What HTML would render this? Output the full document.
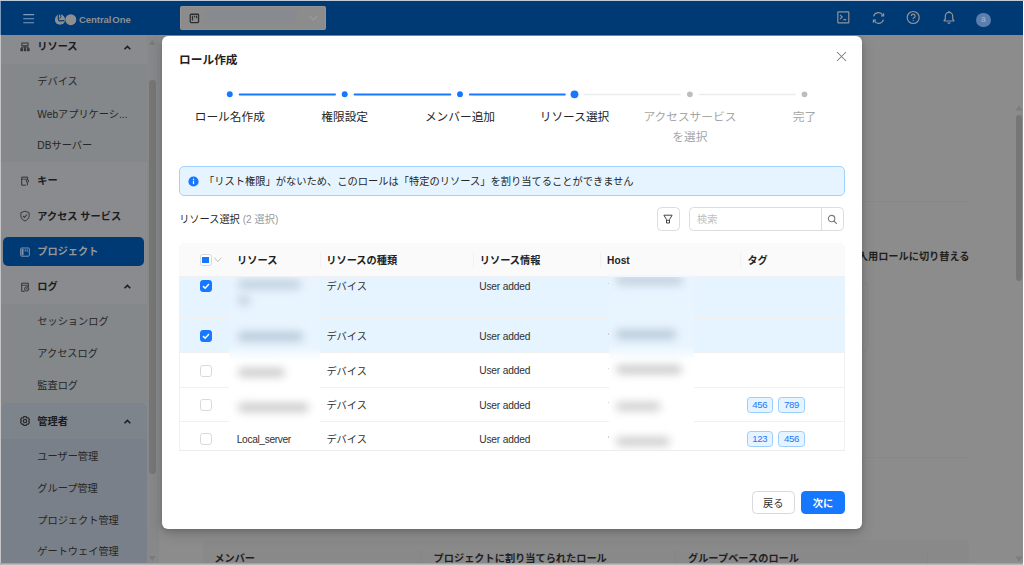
<!DOCTYPE html>
<html lang="ja">
<head>
<meta charset="utf-8">
<title>ロール作成</title>
<style>
*{box-sizing:border-box;margin:0;padding:0}
html,body{width:1024px;height:565px;overflow:hidden;background:#fff}
body{font-family:"Liberation Sans","Noto Sans CJK JP",sans-serif;font-size:10.2px;color:#262626;position:relative}
.abs{position:absolute}
#frame{position:absolute;left:1px;top:1px;width:1022px;height:563px;background:#8c8c8c;overflow:hidden;border-radius:0 0 2px 2px}
#hdr{position:absolute;left:0;top:0;width:1022px;height:34px;background:#003a75}
#side{position:absolute;left:0;top:34px;width:146px;height:529px;background:#8a8b8e;overflow:hidden}
#side .sub{position:absolute;left:0;width:146px;background:#84888b}
#side .it{position:absolute;left:36.3px;white-space:nowrap;color:#262626;font-size:10.2px;line-height:14px}
#side .b{font-weight:700;color:#1c1c1c}
#side svg{position:absolute}
.sbtrack{position:absolute;background:#8c8c8c}
.sbthumb{position:absolute;background:#7a7a7a;border-radius:4px}
#modal{position:absolute;left:161px;top:35px;width:700.4px;height:493px;background:#fff;border-radius:6px;box-shadow:0 4px 14px rgba(0,0,0,.18),0 2px 5px rgba(0,0,0,.12)}
.step{position:absolute;text-align:center;font-size:11.7px;line-height:19.7px;color:#262626;white-space:nowrap;transform:translateX(-50%)}
.step.g{color:#a6a6a6}
.dot{position:absolute;border-radius:50%;background:#1677ff}
.dot.g{background:#bfbfbf}
.ln{position:absolute;background:#1677ff;border-radius:1px}
.ln.g{background:#ebebeb}
.cb{position:absolute;width:12px;height:12px;border-radius:2.8px;border:1px solid #d9d9d9;background:#fff}
.cb.on{background:#1677ff;border-color:#1677ff}
.row{position:absolute;left:0;width:100%;border-bottom:1px solid #f0f0f0}
.row.sel{background:#e6f4ff}
.c{position:absolute;white-space:nowrap;line-height:14px;font-size:10.2px;color:#303030}
.tag{position:absolute;height:15.8px;border:1px solid #9bcdff;background:#e6f4ff;color:#1677ff;border-radius:3.4px;font-size:9.6px;letter-spacing:-0.3px;line-height:13.8px;text-align:center}
.bl{position:absolute;border-radius:5px;filter:blur(4.3px)}
.bgt{position:absolute;white-space:nowrap;font-weight:700;color:#1f1f1f;font-size:10.2px;line-height:14px}
</style>
</head>
<body>
<div id="frame">
<div id="hdr">
<svg class="abs" style="left:22px;top:12px" width="12" height="12" viewBox="0 0 12 12"><path d="M0.3 1.6H11.1M0.3 5.7H11.1M0.3 9.8H11.1" stroke="#7f9bbd" stroke-width="1.05" fill="none"/></svg>
<svg class="abs" style="left:53px;top:12px" width="26" height="14" viewBox="0 0 26 14">
      <circle cx="6" cy="6.7" r="5.1" fill="#8f8f8f"/>
      <path d="M4.7 1.6 C3.9 4 4.2 7.9 5.6 7.9 L10.4 7.6" stroke="#003a75" stroke-width="1.15" fill="none"/>
      <path d="M6.2 1.2 L6.9 3.6 L5.8 5.6" stroke="#003a75" stroke-width="0.9" fill="none"/>
      <circle cx="16.8" cy="6.7" r="5.5" fill="#8f8f8f"/>
    </svg>
<div class="abs" style="left:78px;top:12px;font-size:9.6px;line-height:14px;font-weight:700;color:#8e8e8e;letter-spacing:-0.1px;white-space:nowrap">Central<span style="margin-left:1px">One</span></div>
<div class="abs" style="left:179px;top:5px;width:146px;height:24px;background:#8c8c8c;border:1px solid #949494;border-radius:1.500px"></div>
<svg class="abs" style="left:187.500px;top:11.800px" width="11" height="11" viewBox="0 0 11 11"><rect x="1.250" y="1.250" width="8.300" height="8.300" rx="0.800" fill="none" stroke="#2e2e2e" stroke-width="1.300"/><path d="M3.500 2.800V7.600M5.600 2.800V4.600M7.600 2.800V5.200" stroke="#2e2e2e" stroke-width="1.200" fill="none"/></svg>
<div class="abs" style="left:203.500px;top:10.200px;width:92px;height:14.600px;background:linear-gradient(to bottom,#848991,#898b8f 55%,#8c8c8c);filter:blur(1.200px)"></div>
<svg class="abs" style="left:308px;top:14px" width="9" height="7" viewBox="0 0 9 7"><path d="M0.8 1.2L4.4 5.2L8 1.2" stroke="#a6a6a6" stroke-width="0.9" fill="none"/></svg>
<svg class="abs" style="left:836px;top:9.7px" width="13" height="13" viewBox="0 0 13 13"><rect x="0.8" y="0.8" width="11" height="11" rx="0.6" fill="none" stroke="#939393" stroke-width="1.2"/><path d="M3 3.8L5.3 6L3 8.2M6.3 8.6H9.2" stroke="#939393" stroke-width="1.1" fill="none"/></svg>
<svg class="abs" style="left:871px;top:9.7px" width="13" height="14" viewBox="0 0 13 14"><path d="M1.6 5.4A5 5 0 0 1 10.8 4.2M11.4 8.6A5 5 0 0 1 2.2 9.8" stroke="#939393" stroke-width="1.2" fill="none"/><path d="M11.6 2.2V4.8H9M1.4 11.8V9.2H4" stroke="#939393" stroke-width="1.2" fill="none"/></svg>
<svg class="abs" style="left:905px;top:9.2px" width="15" height="15" viewBox="0 0 15 15"><circle cx="7.2" cy="7.5" r="6" fill="none" stroke="#939393" stroke-width="1.2"/><path d="M5.3 6A1.9 1.9 0 1 1 7.9 7.8C7.3 8.1 7.2 8.5 7.2 9.1" stroke="#939393" stroke-width="1.2" fill="none"/><circle cx="7.2" cy="10.7" r="0.65" fill="#939393"/></svg>
<svg class="abs" style="left:941px;top:8.7px" width="14" height="15" viewBox="0 0 14 15"><path d="M2.2 11V10.2L3.3 9.3V6A3.7 3.7 0 0 1 10.7 6V9.3L11.8 10.2V11Z" fill="none" stroke="#939393" stroke-width="1.2" stroke-linejoin="round"/><path d="M7 1V2.4M5.8 12.4A1.3 1.3 0 0 0 8.2 12.4" stroke="#939393" stroke-width="1.2" fill="none"/></svg>
<div class="abs" style="left:975px;top:11.7px;width:14.5px;height:14.5px;border-radius:50%;background:#5b7eae;color:#a8b3c2;font-size:8.5px;line-height:13.5px;text-align:center">a</div>
</div>
<div id="side">
<div class="sub" style="top:28.7px;height:98.7px"></div>
<div class="sub" style="top:269px;height:99.3px"></div>
<div class="sub" style="top:368.3px;height:200px;background:#7e848c;border-radius:5px 5px 0 0"></div>
<div class="sub" style="top:403.5px;height:200px;background:#798089"></div>
<div class="abs" style="left:2px;top:201.6px;width:140.700px;height:29.500px;background:#003a75;border-radius:5px"></div>
<div class="it b" style="top:5.3px">リソース</div>
<div class="it" style="top:40.4px">デバイス</div>
<div class="it" style="top:72.5px"><span class="la">Web</span>アプリケーシ...</div>
<div class="it" style="top:104.3px"><span class="la">DB</span>サーバー</div>
<div class="it b" style="top:138.9px">キー</div>
<div class="it b" style="top:174.6px">アクセス サービス</div>
<div class="it b" style="top:209.8px;color:#979797">プロジェクト</div>
<div class="it b" style="top:244.7px">ログ</div>
<div class="it" style="top:280.1px">セッションログ</div>
<div class="it" style="top:312.0px">アクセスログ</div>
<div class="it" style="top:344.0px">監査ログ</div>
<div class="it b" style="top:379.5px">管理者</div>
<div class="it" style="top:414.9px">ユーザー管理</div>
<div class="it" style="top:446.7px">グループ管理</div>
<div class="it" style="top:478.6px">プロジェクト管理</div>
<div class="it" style="top:510.3px">ゲートウェイ管理</div>
<svg style="left:121.9px;top:8.6px" width="9" height="7" viewBox="0 0 9 7"><path d="M1.500 5.300L4.400 2.400L7.300 5.300" stroke="#1f1f1f" stroke-width="1.600" fill="none"/></svg>
<svg style="left:121.9px;top:247.9px" width="9" height="7" viewBox="0 0 9 7"><path d="M1.500 5.300L4.400 2.400L7.300 5.300" stroke="#1f1f1f" stroke-width="1.600" fill="none"/></svg>
<svg style="left:121.9px;top:383.0px" width="9" height="7" viewBox="0 0 9 7"><path d="M1.500 5.300L4.400 2.400L7.300 5.300" stroke="#1f1f1f" stroke-width="1.600" fill="none"/></svg>
<svg style="left:18.3px;top:5.6px" width="12" height="12" viewBox="0 0 12 12" fill="none" stroke="#333" stroke-width="1"><rect x="2.9" y="2" width="6.2" height="2.8"/><rect x="1.4" y="7.2" width="2.6" height="3" fill="#333" stroke="none"/><rect x="4.8" y="7.2" width="2.4" height="3" fill="#333" stroke="none"/><rect x="8" y="7.2" width="2.6" height="3" fill="#333" stroke="none"/><path d="M6 4.800V7.200M2.700 7.200V6.100H9.300V7.200"/></svg>
<svg style="left:18px;top:140.4px" width="12" height="12" viewBox="0 0 12 12" fill="none" stroke="#333" stroke-width="1"><path d="M8.600 4.400V2.100H2.700V10.200H7"/><path d="M2.700 4.100H8.600" stroke-width="0.800"/><circle cx="8.400" cy="5.900" r="1.250"/><path d="M8.400 7.200V10.300"/></svg>
<svg style="left:18.4px;top:175.3px" width="12" height="12" viewBox="0 0 12 12" fill="none" stroke="#3a3a3a" stroke-width="1"><path d="M6 1.200L10.100 2.600V6C10.100 8.300 8.400 10 6 11C3.600 10 1.900 8.300 1.900 6V2.600Z" stroke-linejoin="round"/><path d="M4.100 6L5.500 7.400L8 4.500" stroke-width="1.100"/></svg>
<svg style="left:18.2px;top:210.5px" width="12" height="12" viewBox="0 0 12 12" fill="none" stroke="#8094b0" stroke-width="1"><rect x="1.700" y="2" width="8.600" height="8.200" rx="0.800"/><rect x="2.600" y="2.900" width="1.900" height="6.400" fill="#8094b0" stroke="none"/><path d="M6.200 3.400V5.400M8.200 3.400V5.800"/></svg>
<svg style="left:18px;top:245.5px" width="12" height="12" viewBox="0 0 12 12" fill="none" stroke="#333" stroke-width="1"><path d="M9.300 6.200V2.200H2.700V10.300H5.800"/><path d="M2.700 4.300H9.300" stroke-width="0.800"/><circle cx="7.700" cy="7.900" r="2.100"/><path d="M7.700 6.900V8.100H8.700" stroke-width="0.800"/></svg>
<svg style="left:18.1px;top:379.9px" width="12" height="12" viewBox="0 0 12 12" fill="none" stroke="#2b2b2b" stroke-width="1"><circle cx="6" cy="6" r="1.700" stroke-width="1.200"/><path d="M4.89 1.54L7.11 1.54L7.85 2.80L9.31 2.80L10.42 4.73L9.70 6.00L10.42 7.27L9.31 9.20L7.85 9.20L7.11 10.46L4.89 10.46L4.15 9.20L2.69 9.20L1.58 7.27L2.30 6.00L1.58 4.73L2.69 2.80L4.15 2.80Z" stroke-linejoin="round" stroke-width="1.300"/></svg>
</div>
<div class="sbtrack" style="left:146px;top:34px;width:11.6px;height:529px;background:#87888a"></div>
<svg class="abs" style="left:147.3px;top:37.8px" width="9" height="7" viewBox="0 0 9 7"><path d="M1 6L4.3 0.800L7.600 6Z" fill="#7a7a7a"/></svg>
<svg class="abs" style="left:147.3px;top:553.5px" width="9" height="7" viewBox="0 0 9 7"><path d="M1 1L4.300 6.200L7.600 1Z" fill="#7a7a7a"/></svg>
<div class="sbthumb" style="left:148.3px;top:78.6px;width:6.800px;height:394px;background:#767676;border-radius:3.400px"></div>
<div id="bg">
<svg class="abs" style="left:1014px;top:103.5px" width="8" height="6" viewBox="0 0 8 6"><path d="M0.5 5.5L4 0.5L7.5 5.500Z" fill="#7d7d7d"/></svg>
<div class="sbthumb" style="left:1015px;top:113.8px;width:6px;height:166.2px;background:#767676;border-radius:3px"></div>
<svg class="abs" style="left:1014px;top:554.5px" width="8" height="6" viewBox="0 0 8 6"><path d="M0.5 0.5L4 5.5L7.5 0.500Z" fill="#7d7d7d"/></svg>
<div class="abs" style="left:859px;top:200px;width:109px;height:1px;background:#888"></div>
<div class="bgt" style="left:856.8px;top:248.9px">入用ロールに切り替える</div>
<div class="abs" style="left:859px;top:455.5px;width:109px;height:1px;background:#888"></div>
<div class="abs" style="left:847px;top:282.3px;width:20px;height:69px;border:1px solid #868686;border-radius:0 3.500px 3.500px 0"></div>
<div class="abs" style="left:201.7px;top:538.6px;width:766.0px;height:40px;background:#898989;border-radius:5px 5px 0 0"></div>
<div class="abs" style="left:420px;top:550px;width:1px;height:14px;background:#858585"></div>
<div class="abs" style="left:673.6px;top:550px;width:1px;height:14px;background:#858585"></div>
<div class="abs" style="left:926px;top:550px;width:1px;height:14px;background:#858585"></div>
<div class="bgt" style="left:213.3px;top:551.2px">メンバー</div>
<div class="bgt" style="left:432.6px;top:551.2px">プロジェクトに割り当てられたロール</div>
<div class="bgt" style="left:687px;top:551.2px">グループベースのロール</div>
</div>
<div id="modal">
<div class="abs" style="left:17.1px;top:15.5px;font-size:11.7px;line-height:16px;font-weight:700;color:#1f1f1f;white-space:nowrap">ロール作成</div>
<svg class="abs" style="left:674.3px;top:14.9px" width="11" height="11" viewBox="0 0 11 11"><path d="M1 1L10 10M10 1L1 10" stroke="#7c7c7c" stroke-width="1.050" fill="none"/></svg>
<svg class="abs" style="left:0;top:48px" width="700" height="20" viewBox="0 0 700 20"><circle cx="67.8" cy="10.3" r="2.95" fill="#1677ff"/><rect x="76.7" y="9.55" width="97.3" height="2.0" rx="1.0" fill="#1677ff"/><circle cx="182.7" cy="10.3" r="2.95" fill="#1677ff"/><rect x="191.6" y="9.55" width="97.7" height="2.0" rx="1.0" fill="#1677ff"/><circle cx="298" cy="10.3" r="2.95" fill="#1677ff"/><rect x="306.9" y="9.55" width="96.9" height="2.0" rx="1.0" fill="#1677ff"/><circle cx="412.5" cy="10.3" r="3.9" fill="#1677ff"/><rect x="421.4" y="9.8" width="97.8" height="1.5" rx="0.75" fill="#ececec"/><circle cx="527.9" cy="10.3" r="2.85" fill="#bdbdbd"/><rect x="536.8" y="9.8" width="97.0" height="1.5" rx="0.75" fill="#ececec"/><circle cx="642.5" cy="10.3" r="2.85" fill="#bdbdbd"/></svg>
<div class="step" style="left:67.8px;top:71.0px">ロール名作成</div>
<div class="step" style="left:182.7px;top:71.0px">権限設定</div>
<div class="step" style="left:298px;top:71.0px">メンバー追加</div>
<div class="step" style="left:412.5px;top:71.0px;color:#222">リソース選択</div>
<div class="step g" style="left:527.9px;top:71.0px">アクセスサービス<br>を選択</div>
<div class="step g" style="left:642.5px;top:71.0px">完了</div>
<div class="abs" style="left:17.3px;top:130.4px;width:665.4px;height:29.2px;background:#e6f4ff;border:1px solid #a3d1ff;border-radius:5px"></div>
<svg class="abs" style="left:26.1px;top:140.2px" width="11" height="11" viewBox="-0.5 -0.5 11 11"><circle cx="5" cy="5" r="5.100" fill="#1677ff"/><rect x="4.4" y="4.2" width="1.2" height="3.400" fill="#fff"/><circle cx="5" cy="2.8" r="0.75" fill="#fff"/></svg>
<div class="c" style="left:41.9px;top:139.1px;color:#262626;font-size:10.26px">「リスト権限」がないため、このロールは「特定のリソース」を割り当てることができません</div>
<div class="c" style="left:17.2px;top:177.3px;color:#262626">リソース選択 <span style="color:#999">(2 選択)</span></div>
<div class="abs" style="left:494.6px;top:171.3px;width:23.200px;height:23.500px;border:1px solid #dcdcdc;border-radius:4.500px;background:#fff"></div>
<svg class="abs" style="left:501.2px;top:178.2px" width="10" height="10" viewBox="0 0 10 10" fill="none" stroke="#444" stroke-width="1"><path d="M0.900 1.200H9.100L6.500 5.600V9H3.500V5.600Z" stroke-linejoin="round"/><path d="M3.6 6.3H6.400"/></svg>
<div class="abs" style="left:526.6px;top:171.3px;width:155.3px;height:23.500px;border:1px solid #dcdcdc;border-radius:4.500px;background:#fff"></div>
<div class="abs" style="left:658.5px;top:171.3px;width:1px;height:23.500px;background:#dcdcdc"></div>
<div class="c" style="left:535px;top:176.8px;color:#bfbfbf">検索</div>
<svg class="abs" style="left:664.7px;top:177.8px" width="11" height="11" viewBox="0 0 11 11" fill="none" stroke="#7a7a7a" stroke-width="1.1"><circle cx="4.6" cy="4.6" r="3.2"/><path d="M7 7L9.8 9.800"/></svg>
<div id="tbl" class="abs" style="left:17px;top:207.3px;width:666px;height:207.5px;overflow:hidden;border-radius:5px 5px 0 0">
<div class="abs" style="left:0;top:0;width:1px;height:100%;background:#f0f0f0"></div>
<div class="abs" style="right:0;top:0;width:1px;height:100%;background:#f0f0f0"></div>
<div class="row sel" style="top:33.7px;height:41.6px"></div>
<div class="row sel" style="top:75.3px;height:34.6px"></div>
<div class="row" style="top:109.9px;height:34.6px"></div>
<div class="row" style="top:144.5px;height:34.6px"></div>
<div class="row" style="top:179.1px;height:34.6px"></div>
<div class="cb on" style="left:20.5px;top:36.4px"></div><svg class="abs" style="left:20.5px;top:36.4px" width="12" height="12" viewBox="0 0 12 12"><path d="M3 6.1L5.1 8.2L9 3.9" stroke="#fff" stroke-width="1.5" fill="none"/></svg>
<div class="c" style="left:147.4px;top:36.4px">デバイス</div>
<div class="c" style="left:300.2px;top:36.3px;letter-spacing:-0.15px">User added</div>
<div class="abs" style="left:428.8px;top:39.4px;width:1.5px;height:1.5px;background:#c8c8c8;border-radius:50%"></div>
<div class="cb on" style="left:20.5px;top:86.9px"></div><svg class="abs" style="left:20.5px;top:86.9px" width="12" height="12" viewBox="0 0 12 12"><path d="M3 6.1L5.1 8.2L9 3.9" stroke="#fff" stroke-width="1.5" fill="none"/></svg>
<div class="c" style="left:147.4px;top:86.9px">デバイス</div>
<div class="c" style="left:300.2px;top:86.8px;letter-spacing:-0.15px">User added</div>
<div class="abs" style="left:428.8px;top:89.9px;width:1.5px;height:1.5px;background:#c8c8c8;border-radius:50%"></div>
<div class="cb" style="left:20.5px;top:121.3px"></div>
<div class="c" style="left:147.4px;top:121.3px">デバイス</div>
<div class="c" style="left:300.2px;top:121.2px;letter-spacing:-0.15px">User added</div>
<div class="abs" style="left:428.8px;top:124.3px;width:1.5px;height:1.5px;background:#c8c8c8;border-radius:50%"></div>
<div class="cb" style="left:20.5px;top:155.6px"></div>
<div class="c" style="left:147.4px;top:155.6px">デバイス</div>
<div class="c" style="left:300.2px;top:155.5px;letter-spacing:-0.15px">User added</div>
<div class="abs" style="left:428.8px;top:158.6px;width:1.5px;height:1.5px;background:#c8c8c8;border-radius:50%"></div>
<div class="cb" style="left:20.5px;top:190.1px"></div>
<div class="c" style="left:147.4px;top:190.1px">デバイス</div>
<div class="c" style="left:300.2px;top:190.0px;letter-spacing:-0.15px">User added</div>
<div class="abs" style="left:428.8px;top:193.1px;width:1.5px;height:1.5px;background:#c8c8c8;border-radius:50%"></div>
<div class="c" style="left:57.8px;top:190.0px;letter-spacing:-0.36px">Local_server</div>
<div class="tag" style="left:568px;top:153.9px;width:25.5px">456</div>
<div class="tag" style="left:599.4px;top:153.9px;width:26.3px">789</div>
<div class="tag" style="left:568px;top:188.1px;width:25.5px">123</div>
<div class="tag" style="left:599.4px;top:188.1px;width:26.3px">456</div>
<div class="abs" style="left:49.5px;top:33.7px;width:91.7px;height:151px;background:linear-gradient(to bottom,#e9f4fe 0,#e8f4fe 69px,#fff 84px,#fff 100%)"></div>
<div class="abs" style="left:429.7px;top:31.2px;width:85.3px;height:177.5px;background:linear-gradient(to bottom,#e9f4fe 0,#e8f4fe 71.5px,#fff 86.5px,#fff 100%)"></div>
<div class="bl" style="left:59px;top:36.6px;width:63px;height:9px;background:#c0d0de"></div>
<div class="bl" style="left:59px;top:53.2px;width:12px;height:9px;background:#c0d0dd"></div>
<div class="bl" style="left:59px;top:88.8px;width:65px;height:9px;background:#b7c8d7"></div>
<div class="bl" style="left:59px;top:125.1px;width:47px;height:9px;background:#cbcbcb"></div>
<div class="bl" style="left:59px;top:160.2px;width:71px;height:9px;background:#cbcbcb"></div>
<div class="bl" style="left:437px;top:33.0px;width:67px;height:9px;background:#c0d0de"></div>
<div class="bl" style="left:437px;top:86.7px;width:60px;height:9px;background:#b7c8d7"></div>
<div class="bl" style="left:437px;top:122.2px;width:66px;height:9px;background:#cbcbcb"></div>
<div class="bl" style="left:437px;top:158.4px;width:45px;height:9px;background:#d0d0d0"></div>
<div class="bl" style="left:437px;top:194.2px;width:54px;height:9px;background:#cecece"></div>
<div class="abs" style="left:0;top:0;width:100%;height:33.6px;background:#fafafa;border-bottom:1px solid #f0f0f0"></div>
<div class="abs" style="left:429.7px;top:31.1px;width:85.3px;height:3px;background:linear-gradient(to bottom,#fafafa,#eff6fc)"></div>
<div class="abs" style="left:140.6px;top:9px;width:1px;height:16px;background:#f2f2f2"></div>
<div class="abs" style="left:293.6px;top:9px;width:1px;height:16px;background:#f2f2f2"></div>
<div class="abs" style="left:420.8px;top:9px;width:1px;height:16px;background:#f2f2f2"></div>
<div class="abs" style="left:561.3px;top:9px;width:1px;height:16px;background:#f2f2f2"></div>
<div class="c" style="left:58.1px;top:10.9px;font-weight:700;color:#1f1f1f">リソース</div>
<div class="c" style="left:147.3px;top:10.9px;font-weight:700;color:#1f1f1f">リソースの種類</div>
<div class="c" style="left:300.8px;top:10.9px;font-weight:700;color:#1f1f1f">リソース情報</div>
<div class="c" style="left:428.1px;top:10.9px;font-weight:700;color:#1f1f1f">Host</div>
<div class="c" style="left:568.4px;top:10.9px;font-weight:700;color:#1f1f1f">タグ</div>
<div class="cb" style="left:20.5px;top:10.8px"></div><div class="abs" style="left:23.4px;top:13.7px;width:6.200px;height:6.200px;background:#1677ff"></div>
<svg class="abs" style="left:34.8px;top:14.1px" width="8" height="6" viewBox="0 0 8 6"><path d="M0.600 0.800L3.800 4.800L7 0.800" stroke="#bdbdbd" stroke-width="0.900" fill="none"/></svg>
</div>
<div class="abs" style="left:17px;top:414.3px;width:666px;height:1px;background:#ececec"></div>
<div class="abs" style="left:589.6px;top:455.2px;width:43.3px;height:23.3px;border:1px solid #d9d9d9;border-radius:4.5px;background:#fff;font-size:10.2px;line-height:23.4px;text-align:center;color:#303030">戻る</div>
<div class="abs" style="left:639px;top:455.2px;width:43.9px;height:23.3px;border-radius:4.5px;background:#1677ff;font-size:10.2px;line-height:25.4px;text-align:center;color:#fff;font-weight:700">次に</div>
</div>
</div>
<div class="abs" style="left:0;top:0;width:1024px;height:1px;background:#bdcbda"></div>
<div class="abs" style="left:0;top:1px;width:1px;height:34px;background:#7b99ba"></div>
<div class="abs" style="left:0;top:35px;width:1px;height:528px;background:#c4c4c5"></div>
<div class="abs" style="left:0;top:563px;width:1023px;height:1px;background:#a2a2a2"></div>
<div class="abs" style="left:0;top:564px;width:1023px;height:1px;background:#b8b8b8"></div>
</body>
</html>
